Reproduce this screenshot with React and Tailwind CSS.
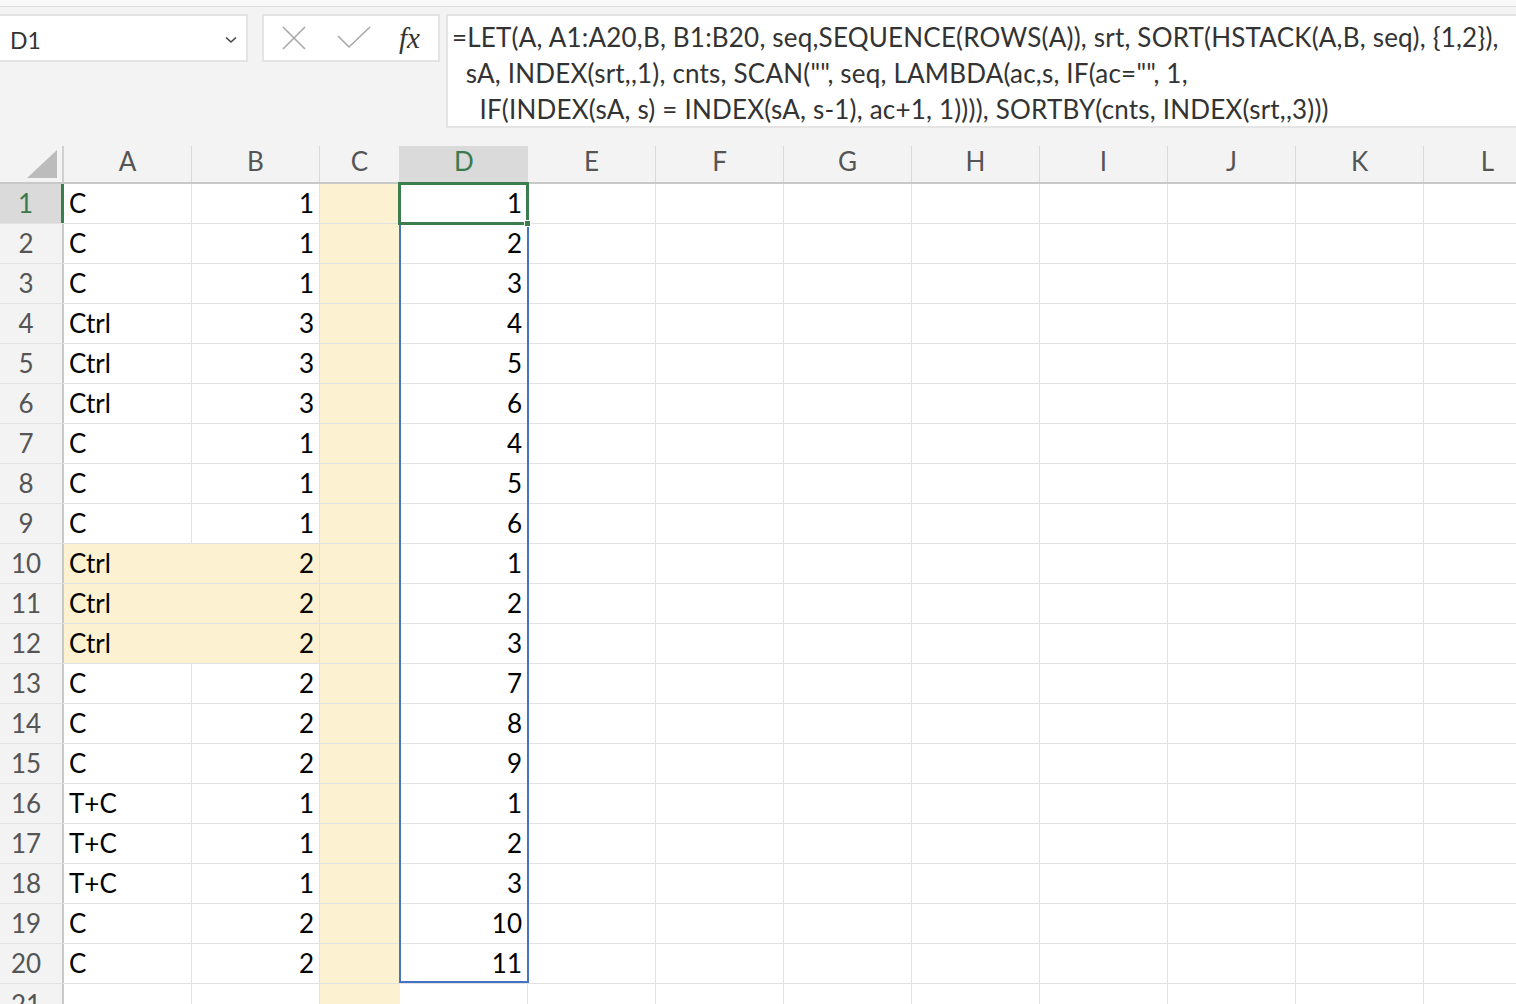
import React from "react";

const colA = ["C", "C", "C", "Ctrl", "Ctrl", "Ctrl", "C", "C", "C", "Ctrl", "Ctrl", "Ctrl", "C", "C", "C", "T+C", "T+C", "T+C", "C", "C"];
const colB = [1, 1, 1, 3, 3, 3, 1, 1, 1, 2, 2, 2, 2, 2, 2, 1, 1, 1, 2, 2];
const colD = [1, 2, 3, 4, 5, 6, 4, 5, 6, 1, 2, 3, 7, 8, 9, 1, 2, 3, 10, 11];
const rest = ["E", "F", "G", "H", "I", "J", "K", "L"];

const font = { fontFamily: "Lato, 'Open Sans', sans-serif" };

const formula = [
  "=LET(A, A1:A20,B, B1:B20, seq,SEQUENCE(ROWS(A)), srt, SORT(HSTACK(A,B, seq), {1,2}),",
  "  sA, INDEX(srt,,1), cnts, SCAN(\"\", seq, LAMBDA(ac,s, IF(ac=\"\", 1,",
  "    IF(INDEX(sA, s) = INDEX(sA, s-1), ac+1, 1)))), SORTBY(cnts, INDEX(srt,,3)))",
];

const Toolbar = () => (
  <div className="h-[146px] bg-[#f3f3f3]">
    <div className="h-[7px] bg-[#f8f8f8] border-b border-[#dcdcdc]" />
    <div className="flex items-start pt-[7px]">
      <div className="w-[248px] h-[48px] bg-white border-2 border-[#e4e4e4] border-l-0 flex items-center justify-between pl-[10px] pr-[8px]">
        <span className="text-[23px] text-[#333] mt-[5px]">D1</span>
        <svg width="14" height="10" viewBox="0 0 14 10" className="mt-1">
          <path d="M2 2.5 L7 7 L12 2.5" fill="none" stroke="#444" strokeWidth="1.6" />
        </svg>
      </div>
      <div className="ml-[14px] w-[178px] h-[48px] bg-white border-2 border-[#e4e4e4] flex items-center">
        <svg width="26" height="26" viewBox="0 0 26 26" className="ml-[17px]">
          <path d="M2 2 L24 24 M24 2 L2 24" stroke="#a8a8a8" strokeWidth="1.6" />
        </svg>
        <svg width="34" height="24" viewBox="0 0 34 24" className="ml-[30px]">
          <path d="M1 10 L12 21 L33 1" fill="none" stroke="#a8a8a8" strokeWidth="1.6" />
        </svg>
        <span className="ml-[28px] text-[29px] italic text-[#333] leading-none" style={{ fontFamily: "'Liberation Serif', serif" }}>
          fx
        </span>
      </div>
      <div className="ml-[6px] flex-1 h-[114px] bg-white border-2 border-[#e4e4e4] border-r-0 pl-[4px] pt-[3px] text-[26px] leading-[36px] tracking-[0.2px] text-[#333] whitespace-pre">
        {formula.map((l, k) => (
          <div key={k}>{l}</div>
        ))}
      </div>
    </div>
  </div>
);

const Header = () => (
  <div className="flex h-[38px] bg-[#f3f3f3] border-b-2 border-[#c9c9c9] text-[26px] text-[#555]">
    <div className="w-[64px] shrink-0 flex items-end justify-end pr-[5px] pb-[4px] border-r-2 border-[#d0d0d0]">
      <svg width="30" height="28" viewBox="0 0 30 28">
        <polygon points="30,0 30,28 0,28" fill="#bcbcbc" />
      </svg>
    </div>
    <div className="w-[128px] shrink-0 flex items-center justify-center pb-[5px] border-r border-[#dadada]">A</div>
    <div className="w-[128px] shrink-0 flex items-center justify-center pb-[5px] border-r border-[#dadada]">B</div>
    <div className="w-[80px] shrink-0 flex items-center justify-center pb-[5px] border-r border-[#dadada]">C</div>
    <div className="w-[128px] shrink-0 flex items-center justify-center pb-[5px] bg-[#dadada] text-[#3a7a4e]">D</div>
    {rest.map((c) => (
      <div key={c} className="w-[128px] shrink-0 flex items-center justify-center pb-[5px] border-r border-[#dadada]">
        {c}
      </div>
    ))}
  </div>
);

const Row = ({ n }) => {
  const i = n - 1;
  const hl = n >= 10 && n <= 12;
  const cell = "shrink-0 h-full border-r border-[#e2e2e2]";
  return (
    <div className="flex h-[40px] border-b border-[#e2e2e2] text-[26px] text-black">
      <div
        className={`w-[64px] shrink-0 flex items-center justify-center pr-[10px] border-r-2 ${
          n === 1 ? "bg-[#dadada] text-[#3a7a4e] border-[#3c7d4f] border-r-[3px]" : "bg-[#f3f3f3] text-[#555] border-[#c9c9c9]"
        }`}
      >
        {n}
      </div>
      <div className={`${cell} w-[128px] flex items-center pl-[5px] ${hl ? "bg-[#fcf1d0] border-[#fcf1d0]" : "bg-white"}`}>
        {colA[i]}
      </div>
      <div className={`${cell} w-[128px] flex items-center justify-end pr-[5px] ${hl ? "bg-[#fcf1d0]" : "bg-white"}`}>
        {colB[i]}
      </div>
      <div className="shrink-0 h-full w-[80px] bg-[#fcf1d0]" />
      <div className={`${cell} w-[128px] flex items-center justify-end pr-[5px] bg-white`}>{colD[i]}</div>
      {rest.map((c) => (
        <div key={c} className={`${cell} w-[128px] bg-white`} />
      ))}
    </div>
  );
};

const App = () => {
  const rows = Array.from({ length: 21 }, (_, k) => k + 1);
  return (
    <div className="w-[1516px] h-[1004px] overflow-hidden bg-white" style={font}>
      <Toolbar />
      <div className="relative">
        <Header />
        {rows.map((n) =>
          n <= 20 ? (
            <Row key={n} n={n} />
          ) : (
            <div key={n} className="flex h-[40px] text-[26px]">
              <div className="w-[64px] shrink-0 flex items-center justify-center pr-[10px] bg-[#f3f3f3] text-[#555] border-r-2 border-[#c9c9c9]">
                21
              </div>
              <div className="w-[128px] shrink-0 bg-white border-r border-[#e2e2e2]" />
              <div className="w-[128px] shrink-0 bg-white border-r border-[#e2e2e2]" />
              <div className="w-[80px] shrink-0 bg-[#fcf1d0]" />
              <div className="w-[128px] shrink-0 bg-white border-r border-[#e2e2e2]" />
              {rest.map((c) => (
                <div key={c} className="w-[128px] shrink-0 bg-white border-r border-[#e2e2e2]" />
              ))}
            </div>
          )
        )}
        {/* selected range D1:D20 */}
        <div className="absolute left-[399px] top-[77px] w-[130px] h-[760px] border-2 border-[#4472c4] pointer-events-none" />
        {/* active cell */}
        <div className="absolute left-[398px] top-[36px] w-[131px] h-[43px] border-[3px] border-[#3c7d4f] pointer-events-none" />
        <div className="absolute left-[524px] top-[74px] w-[7px] h-[7px] bg-[#3c7d4f] border border-white" />
      </div>
    </div>
  );
};

export default App;
